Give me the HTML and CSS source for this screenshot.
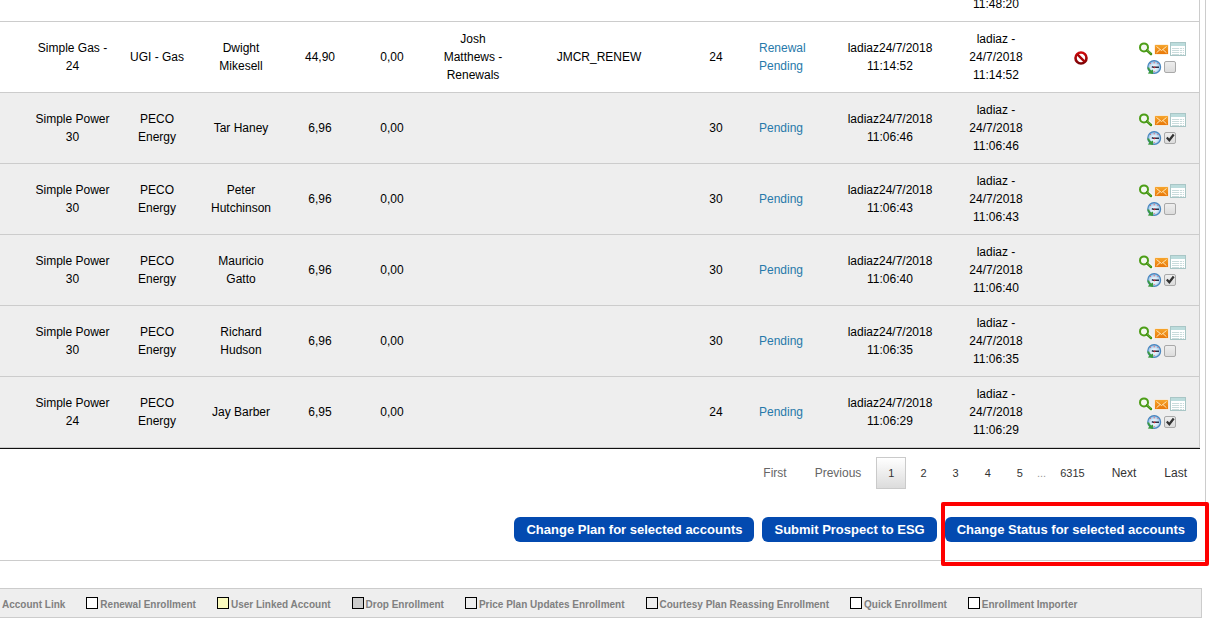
FILE: index.html
```
<!DOCTYPE html>
<html lang="en">
<head>
  <meta charset="UTF-8" />
  <meta name="viewport" content="width=device-width, initial-scale=1.0"/>
  <title>Enrollments</title>
  <link rel="stylesheet" href="styles.css">
</head>
<body>

  <!-- shared icons -->
  <svg class="sprite" aria-hidden="true">
    <defs>
      <radialGradient id="clockFace" cx="50%" cy="55%" r="55%">
        <stop offset="0" stop-color="#ffffff"/>
        <stop offset="0.5" stop-color="#d5e8f6"/>
        <stop offset="1" stop-color="#7fb6e2"/>
      </radialGradient>
      <linearGradient id="mailFill" x1="0" y1="0" x2="0" y2="1">
        <stop offset="0" stop-color="#f6a52c"/>
        <stop offset="1" stop-color="#e97708"/>
      </linearGradient>
      <linearGradient id="stopFill" x1="0" y1="0" x2="0" y2="1">
        <stop offset="0" stop-color="#cf0a0c"/>
        <stop offset="1" stop-color="#7d0306"/>
      </linearGradient>
    </defs>
    <symbol id="icon-search" viewBox="0 0 16 16">
      <path d="M9.5 9.5L13.2 13" stroke="#fff" stroke-width="4.4" stroke-linecap="round"/>
      <circle cx="6" cy="6.4" r="4" fill="#f3f8f0" stroke="#4c9e17" stroke-width="2"/>
      <path d="M9 9.4L13 13" stroke="#3f8d12" stroke-width="2.6" stroke-linecap="round"/>
      <path d="M9.3 9.1L12.8 12.3" stroke="#83c84c" stroke-width="0.8" stroke-linecap="round"/>
    </symbol>
    <symbol id="icon-mail" viewBox="0 0 16 16">
      <rect x="0.5" y="3.5" width="14" height="10" rx="1" fill="#fbe3c4"/>
      <rect x="1" y="4" width="13" height="9" rx="0.6" fill="url(#mailFill)"/>
      <path d="M2.5 5.5L7.5 9.5L12.5 5.5M2.5 11.8L6 8.6M12.5 11.8L9 8.6" fill="none" stroke="#ffe6b8" stroke-width="1"/>
    </symbol>
    <symbol id="icon-table" viewBox="0 0 16 16">
      <rect x="0.5" y="1.5" width="15" height="13" fill="#fff" stroke="#a9c6c6"/>
      <rect x="1" y="2" width="14" height="3" fill="#bcdcdc"/>
      <path d="M2 7.5H14M2 9.5H14M2 11.5H14M2 13.5H14" stroke="#bdd3d3" stroke-width="0.8"/>
      <path d="M9.5 5V14M12.5 5V14" stroke="#fff" stroke-width="0.8"/>
    </symbol>
    <symbol id="icon-clock" viewBox="0 0 16 16">
      <circle cx="8.2" cy="8" r="6.4" fill="url(#clockFace)" stroke="#4a86bf" stroke-width="1.2"/>
      <path d="M8.2 2.6V4.4M8.2 12V13M12.4 4L11.4 5M4 4L5 5" stroke="#e0646b" stroke-width="0.9"/>
      <path d="M5.8 7.8L8.4 8.4M8.4 8.2H13" fill="none" stroke="#26324c" stroke-width="1.5"/>
      <circle cx="8.6" cy="8.3" r="0.9" fill="#d8262e"/>
      <path d="M1.2 8.6C1.6 10.4 2.4 11.6 3.4 12.4L1.8 14.6L7.2 15L7 10.4L5.2 11.4C4.2 10.6 3.4 9.6 3.2 8.4Z" fill="#3a9a3e"/>
    </symbol>
    <symbol id="icon-stop" viewBox="0 0 16 16">
      <circle cx="8" cy="8" r="5.5" fill="#fff" stroke="url(#stopFill)" stroke-width="2.6"/>
      <path d="M4.4 4.4L11.6 11.6" stroke="#a90507" stroke-width="2.4"/>
    </symbol>
  </svg>

  <div class="panel">
    <table class="enrollments">
      <colgroup>
        <col class="col-plan">
        <col class="col-utility">
        <col class="col-name">
        <col class="col-rate">
        <col class="col-fee">
        <col class="col-agent">
        <col class="col-code">
        <col class="col-term">
        <col class="col-status">
        <col class="col-created">
        <col class="col-updated">
        <col class="col-flag">
        <col class="col-actions">
      </colgroup>
      <tbody>
        <tr>
          <td></td><td></td><td></td><td></td><td></td><td></td><td></td><td></td><td></td><td></td>
          <td>11:48:20</td>
          <td></td><td></td>
        </tr>
        <tr>
          <td class="plan">Simple Gas - 24</td>
          <td>UGI - Gas</td>
          <td>Dwight Mikesell</td>
          <td>44,90</td>
          <td>0,00</td>
          <td>Josh Matthews - Renewals</td>
          <td>JMCR_RENEW</td>
          <td>24</td>
          <td class="status"><a href="#">Renewal Pending</a></td>
          <td>ladiaz24/7/2018 11:14:52</td>
          <td>ladiaz - 24/7/2018 11:14:52</td>
          <td class="flag"><svg class="icon"><use href="#icon-stop"/></svg></td>
          <td>
            <div class="actions">
              <a href="#" aria-label="View"><svg class="icon"><use href="#icon-search"/></svg></a>
              <a href="#" aria-label="Email"><svg class="icon"><use href="#icon-mail"/></svg></a>
              <a href="#" aria-label="Details"><svg class="icon"><use href="#icon-table"/></svg></a>
            </div>
            <div class="actions">
              <a href="#" aria-label="History"><svg class="icon"><use href="#icon-clock"/></svg></a>
              <input type="checkbox" aria-label="Select Dwight Mikesell">
            </div>
          </td>
        </tr>
        <tr class="pending">
          <td class="plan">Simple Power 30</td>
          <td>PECO Energy</td>
          <td>Tar Haney</td>
          <td>6,96</td>
          <td>0,00</td>
          <td></td>
          <td></td>
          <td>30</td>
          <td class="status"><a href="#">Pending</a></td>
          <td>ladiaz24/7/2018 11:06:46</td>
          <td>ladiaz - 24/7/2018 11:06:46</td>
          <td></td>
          <td>
            <div class="actions">
              <a href="#" aria-label="View"><svg class="icon"><use href="#icon-search"/></svg></a>
              <a href="#" aria-label="Email"><svg class="icon"><use href="#icon-mail"/></svg></a>
              <a href="#" aria-label="Details"><svg class="icon"><use href="#icon-table"/></svg></a>
            </div>
            <div class="actions">
              <a href="#" aria-label="History"><svg class="icon"><use href="#icon-clock"/></svg></a>
              <input type="checkbox" aria-label="Select Tar Haney" checked>
            </div>
          </td>
        </tr>
        <tr class="pending">
          <td class="plan">Simple Power 30</td>
          <td>PECO Energy</td>
          <td>Peter Hutchinson</td>
          <td>6,96</td>
          <td>0,00</td>
          <td></td>
          <td></td>
          <td>30</td>
          <td class="status"><a href="#">Pending</a></td>
          <td>ladiaz24/7/2018 11:06:43</td>
          <td>ladiaz - 24/7/2018 11:06:43</td>
          <td></td>
          <td>
            <div class="actions">
              <a href="#" aria-label="View"><svg class="icon"><use href="#icon-search"/></svg></a>
              <a href="#" aria-label="Email"><svg class="icon"><use href="#icon-mail"/></svg></a>
              <a href="#" aria-label="Details"><svg class="icon"><use href="#icon-table"/></svg></a>
            </div>
            <div class="actions">
              <a href="#" aria-label="History"><svg class="icon"><use href="#icon-clock"/></svg></a>
              <input type="checkbox" aria-label="Select Peter Hutchinson">
            </div>
          </td>
        </tr>
        <tr class="pending">
          <td class="plan">Simple Power 30</td>
          <td>PECO Energy</td>
          <td>Mauricio Gatto</td>
          <td>6,96</td>
          <td>0,00</td>
          <td></td>
          <td></td>
          <td>30</td>
          <td class="status"><a href="#">Pending</a></td>
          <td>ladiaz24/7/2018 11:06:40</td>
          <td>ladiaz - 24/7/2018 11:06:40</td>
          <td></td>
          <td>
            <div class="actions">
              <a href="#" aria-label="View"><svg class="icon"><use href="#icon-search"/></svg></a>
              <a href="#" aria-label="Email"><svg class="icon"><use href="#icon-mail"/></svg></a>
              <a href="#" aria-label="Details"><svg class="icon"><use href="#icon-table"/></svg></a>
            </div>
            <div class="actions">
              <a href="#" aria-label="History"><svg class="icon"><use href="#icon-clock"/></svg></a>
              <input type="checkbox" aria-label="Select Mauricio Gatto" checked>
            </div>
          </td>
        </tr>
        <tr class="pending">
          <td class="plan">Simple Power 30</td>
          <td>PECO Energy</td>
          <td>Richard Hudson</td>
          <td>6,96</td>
          <td>0,00</td>
          <td></td>
          <td></td>
          <td>30</td>
          <td class="status"><a href="#">Pending</a></td>
          <td>ladiaz24/7/2018 11:06:35</td>
          <td>ladiaz - 24/7/2018 11:06:35</td>
          <td></td>
          <td>
            <div class="actions">
              <a href="#" aria-label="View"><svg class="icon"><use href="#icon-search"/></svg></a>
              <a href="#" aria-label="Email"><svg class="icon"><use href="#icon-mail"/></svg></a>
              <a href="#" aria-label="Details"><svg class="icon"><use href="#icon-table"/></svg></a>
            </div>
            <div class="actions">
              <a href="#" aria-label="History"><svg class="icon"><use href="#icon-clock"/></svg></a>
              <input type="checkbox" aria-label="Select Richard Hudson">
            </div>
          </td>
        </tr>
        <tr class="pending">
          <td class="plan">Simple Power 24</td>
          <td>PECO Energy</td>
          <td>Jay Barber</td>
          <td>6,95</td>
          <td>0,00</td>
          <td></td>
          <td></td>
          <td>24</td>
          <td class="status"><a href="#">Pending</a></td>
          <td>ladiaz24/7/2018 11:06:29</td>
          <td>ladiaz - 24/7/2018 11:06:29</td>
          <td></td>
          <td>
            <div class="actions">
              <a href="#" aria-label="View"><svg class="icon"><use href="#icon-search"/></svg></a>
              <a href="#" aria-label="Email"><svg class="icon"><use href="#icon-mail"/></svg></a>
              <a href="#" aria-label="Details"><svg class="icon"><use href="#icon-table"/></svg></a>
            </div>
            <div class="actions">
              <a href="#" aria-label="History"><svg class="icon"><use href="#icon-clock"/></svg></a>
              <input type="checkbox" aria-label="Select Jay Barber" checked>
            </div>
          </td>
        </tr>
      </tbody>
    </table>

    <nav class="pager" aria-label="Pages">
      <a href="#" class="step disabled">First</a>
      <a href="#" class="step disabled">Previous</a>
      <a href="#" class="current">1</a>
      <a href="#">2</a>
      <a href="#">3</a>
      <a href="#">4</a>
      <a href="#">5</a>
      <span class="dots">...</span>
      <a href="#">6315</a>
      <a href="#" class="step">Next</a>
      <a href="#" class="step">Last</a>
    </nav>

    <div class="buttons">
      <button type="button">Change Plan for selected accounts</button>
      <button type="button">Submit Prospect to ESG</button>
      <div class="highlight">
        <button type="button">Change Status for selected accounts</button>
      </div>
    </div>
  </div>

  <div class="legend">
    <span class="key">Account Link</span>
    <span class="key"><i class="swatch white"></i>Renewal Enrollment</span>
    <span class="key"><i class="swatch yellow"></i>User Linked Account</span>
    <span class="key"><i class="swatch gray"></i>Drop Enrollment</span>
    <span class="key"><i class="swatch"></i>Price Plan Updates Enrollment</span>
    <span class="key"><i class="swatch"></i>Courtesy Plan Reassing Enrollment</span>
    <span class="key"><i class="swatch white"></i>Quick Enrollment</span>
    <span class="key"><i class="swatch white"></i>Enrollment Importer</span>
  </div>

</body>
</html>
```
FILE: styles.css
```
* {
  box-sizing: border-box;
}

body {
  margin: 0;
  background: #fff;
  font-family: "Liberation Sans", Arial, sans-serif;
  font-size: 12px;
  line-height: 18px;
  color: #000;
  overflow: hidden;
}

a {
  text-decoration: none;
}

.sprite {
  position: absolute;
  width: 0;
  height: 0;
}

.panel {
  margin-top: -14px;
  margin-right: 14px;
  padding-right: 5px;
  border-right: 1px solid #ccc;
  border-bottom: 1px solid #ccc;
}

/* table */
.enrollments {
  width: 100%;
  table-layout: fixed;
  border-collapse: separate;
  border-spacing: 0;
  border-bottom: 1px solid #111;
}

.enrollments td {
  padding: 8px;
  border-top: 1px solid #ccc;
  text-align: center;
  vertical-align: middle;
}

.enrollments td:last-child {
  padding-right: 10px;
  border-right: 1px solid #ccc;
}

.enrollments tr:last-child td {
  border-bottom: 1px solid #ccc;
}

.enrollments .pending {
  background: #eee;
}

.enrollments .plan {
  padding-left: 34px;
  padding-right: 4px;
}

.enrollments .status {
  padding-left: 6px;
  text-align: left;
}

.enrollments .flag {
  padding-top: 10px;
}

.status a {
  color: #2779aa;
}

.col-plan { width: 115px; }
.col-utility { width: 84px; }
.col-name { width: 84px; }
.col-rate { width: 74px; }
.col-fee { width: 70px; }
.col-agent { width: 92px; }
.col-code { width: 160px; }
.col-term { width: 74px; }
.col-status { width: 70px; }
.col-created { width: 134px; }
.col-updated { width: 78px; }
.col-flag { width: 92px; }
.col-actions { width: 73px; }

/* row icons */
.icon {
  display: block;
  width: 16px;
  height: 16px;
  margin: 0 auto;
}

.actions {
  display: flex;
  justify-content: center;
  align-items: flex-end;
  height: 18px;
}

.actions input {
  appearance: none;
  width: 12px;
  height: 12px;
  margin: 0 2px 2px;
  border: 1px solid #a9a9a9;
  border-radius: 2px;
  background: linear-gradient(#eee, #dcdcdc);
}

.actions input:checked::before {
  content: '';
  display: block;
  width: 10px;
  height: 10px;
  background: #333;
  clip-path: polygon(10% 52%, 26% 38%, 42% 56%, 78% 8%, 96% 22%, 44% 90%);
}

/* pager */
.pager {
  display: flex;
  justify-content: flex-end;
  gap: 2px;
  padding-top: 8px;
}

.pager a {
  padding: 6px 11px;
  border: 1px solid transparent;
  font-size: 11px;
  color: #333;
}

.pager .step {
  padding: 6px 12px;
  font-size: 12px;
}

.pager .disabled {
  color: #666;
}

.pager .current {
  border-color: #cacaca;
  background: linear-gradient(#fff, #dcdcdc);
}

.pager .dots {
  padding-top: 7px;
  font-size: 11px;
  color: #999;
}

/* bulk buttons */
.buttons {
  display: flex;
  justify-content: flex-end;
  gap: 8px;
  padding: 28px 3px 18px 0;
}

.buttons button {
  height: 25px;
  padding: 0 12px;
  border: none;
  border-radius: 6px;
  background: #034ab0;
  color: #fff;
  font-family: inherit;
  font-size: 13px;
  font-weight: bold;
  cursor: pointer;
}

.highlight {
  position: relative;
}

.highlight::after {
  content: '';
  position: absolute;
  top: -15px;
  right: -12px;
  bottom: -24px;
  left: -4px;
  border: 4px solid #fe0000;
  border-radius: 2px;
  pointer-events: none;
}

/* legend */
.legend {
  display: flex;
  gap: 21px;
  height: 30px;
  margin: 27px 18px 0 0;
  padding: 7px 0 0 2px;
  border: 1px solid #ccc;
  border-left: none;
  background: #eee;
  font-size: 10px;
  font-weight: bold;
  color: #808080;
  white-space: nowrap;
}

.key {
  display: flex;
  gap: 2px;
}

.swatch {
  width: 12px;
  height: 12px;
  margin-top: 1px;
  border: 1px solid #000;
}

.swatch.white {
  background: #fff;
}

.swatch.yellow {
  background: #fafabe;
}

.swatch.gray {
  background: #ccc;
}
```
